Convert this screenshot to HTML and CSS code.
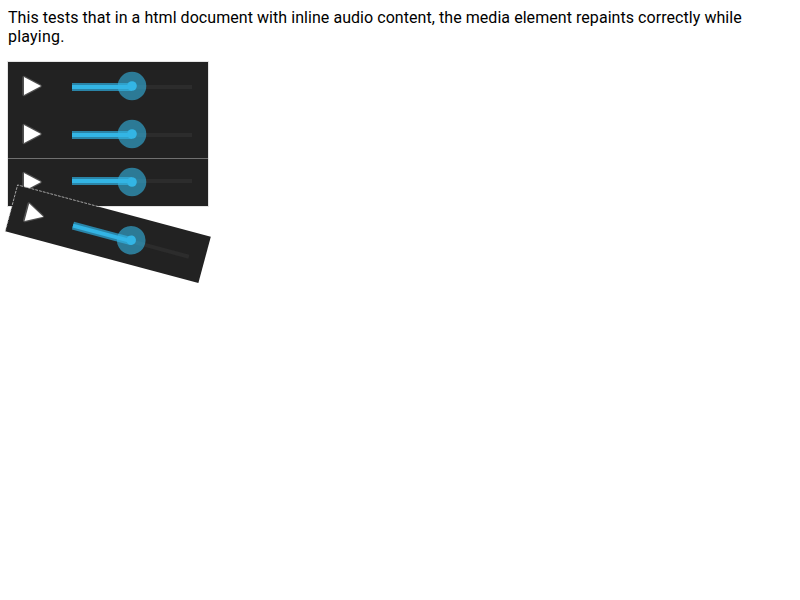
FILE: index.html
```
<!DOCTYPE html>
<html lang="en"><head><meta charset="utf-8"><title>Audio repaint</title><link rel="stylesheet" href="styles.css"></head>
<body>
<svg class="defs" width="0" height="0"><defs>
<g id="play"><path class="play-edge" d="M16 15.5 L32 24 L16 32.5 Z"/><path class="play" d="M16 15 L33 24 L16 33 Z"/></g>
<g id="bar"><path class="track" d="M124 25H184"/><path class="edge" d="M64 25H124"/><path class="fill" d="M64 25H124"/></g>
<g id="thumb"><circle class="halo" cx="124" cy="24" r="14.3"/><circle class="dot" cx="124" cy="24" r="4.8"/></g>
</defs></svg>
<p class="intro">This tests that in a html document with inline audio content, the media element repaints correctly while <span class="last">playing.</span></p>
<div class="players">
<div class="audio"><svg class="controls" viewBox="0 0 200 48"><use href="#play"/><use href="#bar"/><use href="#thumb"/></svg></div>
<div class="audio"><svg class="controls" viewBox="0 0 200 48"><use href="#play"/><use href="#bar"/><use href="#thumb"/></svg></div>
<div class="audio seam"><svg class="controls" viewBox="0 0 200 48"><use href="#play"/><use href="#bar" y="-2"/><use href="#thumb"/></svg></div>
</div>
<div class="audio tilted"><svg class="controls" viewBox="0 0 200 48"><path class="outline" d="M0 48V0H85"/><use href="#play"/><use href="#bar"/><use href="#thumb"/></svg></div>
</body></html>
```
FILE: styles.css
```
html { background: #fff; }
body { box-sizing: border-box; min-height: 600px; margin: 0; padding: 8px; }
.defs { position: absolute; }
.intro { margin: 0 0 16px; font: 16px/19px Roboto, sans-serif; letter-spacing: 0.055px; color: #000; }
.last { letter-spacing: 0.2px; }
.players { display: flex; flex-direction: column; width: 200px; box-shadow: 0 0 0 1px #e4e4e4; }
.audio { width: 200px; height: 48px; background: #222; }
.seam { box-shadow: inset 0 1px #707070; }
.controls { display: block; width: 200px; height: 48px; overflow: visible; }
.tilted { margin-top: 3.5px; transform: rotate(15deg); }
.outline { fill: none; stroke: #ccc; stroke-width: 0.7; stroke-dasharray: 2.8 1.1; }
.play { fill: #fff; }
.play-edge { fill: #505050; stroke: #505050; stroke-width: 3.4; stroke-linejoin: round; }
.track { stroke: #2c2c2c; stroke-width: 4; }
.edge { stroke: #2a84a7; stroke-width: 8; }
.fill { stroke: #33b5e5; stroke-width: 4; }
.halo { fill: #33b5e5; fill-opacity: .6; }
.dot { fill: #33b5e5; }
```
